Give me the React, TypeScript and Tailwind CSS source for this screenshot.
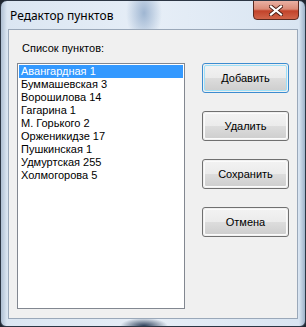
import React from 'react';

const items = [
  'Авангардная 1',
  'Буммашевская 3',
  'Ворошилова 14',
  'Гагарина 1',
  'М. Горького 2',
  'Орженикидзе 17',
  'Пушкинская 1',
  'Удмуртская 255',
  'Холмогорова 5',
];

const buttons = ['Добавить', 'Удалить', 'Сохранить', 'Отмена'];

function DialogButton({ label, isDefault }: { label: string; isDefault?: boolean }) {
  return (
    <button
      className={`w-[87px] h-[30px] rounded-[3px] border p-[1px] ${
        isDefault ? 'border-[#3c8cd0]' : 'border-[#707070]'
      }`}
    >
      <div
        className={`h-full w-full rounded-[2px] border flex items-center justify-center text-[11px] text-black bg-[linear-gradient(to_bottom,#f2f2f2_0%,#ebebeb_50%,#dddddd_50%,#cfcfcf_100%)] ${
          isDefault ? 'border-[#9ee0f8]' : 'border-[#fbfbfb]'
        }`}
      >
        {label}
      </div>
    </button>
  );
}

export default function App() {
  return (
    <div
      className="w-[306px] h-[327px] bg-[#1f2630]"
      style={{ fontFamily: '"Liberation Sans", Arial, sans-serif' }}
    >
      <div className="w-full h-full rounded-t-[7px] rounded-b-[6px] border border-[#2c3644] bg-[linear-gradient(to_right,#aebfd3_0px,#dbe6f2_6px,#e6eef7_50%,#d9e5f2_calc(100%-6px),#9fb3ca_100%)] flex flex-col overflow-hidden">
        {/* title bar */}
        <div className="h-[28px] flex items-start relative bg-[radial-gradient(ellipse_18px_30px_at_143px_12px,#9fb6d2,transparent)]">
          <span
            className="ml-[9px] mt-[6px] text-[12px] text-black"
            style={{ fontFamily: '"Noto Sans", "Open Sans", sans-serif' }}
          >
            Редактор пунктов
          </span>
          <div className="absolute right-[6px] top-[-1px] w-[46px] h-[20px] rounded-b-[4px] border border-[#5b2a20] bg-[linear-gradient(to_bottom,#eab1a4_0%,#db8b77_45%,#c2432a_55%,#d0654a_100%)] flex items-center justify-center">
            <svg width="14" height="11" viewBox="0 0 14 11">
              <path
                d="M2 1.5 L12 9.5 M12 1.5 L2 9.5"
                stroke="#4a1d14"
                strokeWidth="4"
                strokeLinecap="square"
              />
              <path
                d="M2 1.5 L12 9.5 M12 1.5 L2 9.5"
                stroke="#ffffff"
                strokeWidth="2.2"
                strokeLinecap="square"
              />
            </svg>
          </div>
        </div>

        {/* client area */}
        <div className="mx-[7px] h-[290px] border border-[#9aa8b9] bg-[#f0f0f0] flex">
          <div className="ml-[8px] flex flex-col">
            <div className="mt-[12px] ml-[5px] h-[13px] leading-[13px] text-[11px] text-black">
              Список пунктов:
            </div>
            <div className="mt-[8px] w-[168px] h-[246px] border border-[#828790] bg-white p-[1px]">
              {items.map((item, i) => (
                <div
                  key={item}
                  className={`h-[13px] leading-[13px] pl-[2px] text-[11px] whitespace-nowrap ${
                    i === 0 ? 'bg-[#3399ff] text-white' : 'text-black'
                  }`}
                >
                  {item}
                </div>
              ))}
            </div>
          </div>
          <div className="ml-[17px] mt-[33px] flex flex-col gap-[18px]">
            {buttons.map((b, i) => (
              <DialogButton key={b} label={b} isDefault={i === 0} />
            ))}
          </div>
        </div>
        <div className="flex-1 bg-[radial-gradient(ellipse_24px_8px_at_143px_100%,#2c3e58,transparent)]" />
      </div>
    </div>
  );
}
